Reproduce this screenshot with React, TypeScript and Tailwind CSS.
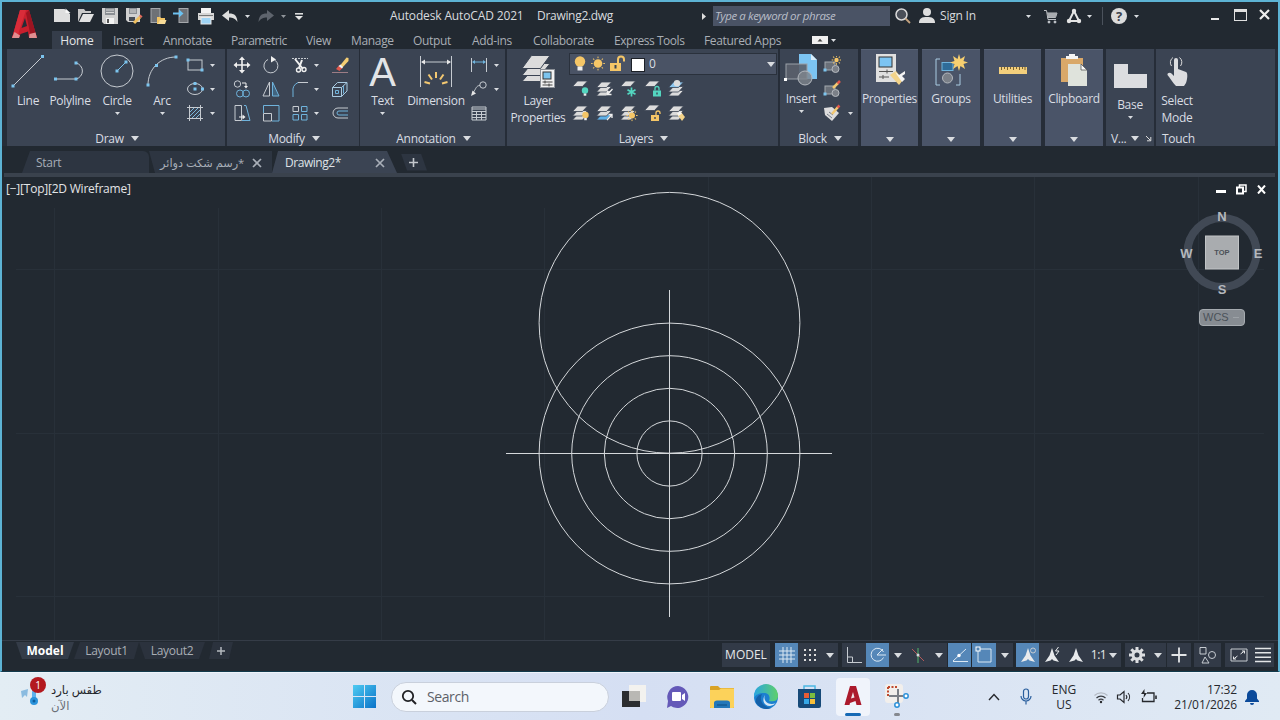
import type { ReactNode } from 'react';
import clsx from 'clsx';

type IconProps = {
    w?: number;
    h?: number;
    className?: string;
    children: ReactNode;
};

function Icon({ w = 18, h = 18, className, children }: IconProps) {
    return (
        <svg
            width={w}
            height={h}
            viewBox={`0 0 ${w} ${h}`}
            fill="none"
            stroke="#c6cbd1"
            strokeWidth={1}
            className={clsx('block shrink-0', className)}
        >
            {children}
        </svg>
    );
}

function Caret({ big = false, className }: { big?: boolean; className?: string }) {
    const w = big ? 8 : 5;
    const h = big ? 5 : 3;
    return (
        <svg width={w} height={h} viewBox={`0 0 ${w} ${h}`} className={clsx('block shrink-0', className)}>
            <path d={`M0 0H${w}L${w / 2} ${h}Z`} fill="#d9dce0" />
        </svg>
    );
}

/* blue grip point */
function Grip({ x, y }: { x: number; y: number }) {
    return <rect x={x - 1.5} y={y - 1.5} width={3} height={3} fill="#7cc4ee" stroke="none" />;
}

function Sheet({ y, fill = '#dcdcdc' }: { y: number; fill?: string }) {
    return (
        <path
            d={`M0.500 ${y + 5.5}L5.500 ${y}H15.500L10.500 ${y + 5.5}Z`}
            fill={fill}
            stroke="#3b4453"
            strokeWidth={0.8}
        />
    );
}

function Bulb({ x, y, fill }: { x: number; y: number; fill: string }) {
    return (
        <g stroke="none">
            <circle cx={x} cy={y} r={3.2} fill={fill} />
            <rect x={x - 1.3} y={y + 3} width={2.6} height={2.2} fill="#eeeeee" />
        </g>
    );
}

function Lock({ x, y, fill, open = false }: { x: number; y: number; fill: string; open?: boolean }) {
    return (
        <g>
            <path
                d={open ? `M${x + 5} ${y}v-2a2 2 0 0 1 4 0v1` : `M${x + 2} ${y}v-2a2 2 0 0 1 4 0v2`}
                stroke={fill}
                strokeWidth={1.3}
            />
            <rect x={x} y={y} width={8} height={6} fill={fill} stroke="none" />
            <rect x={x + 3.3} y={y + 2} width={1.4} height={2} fill="#3b4453" stroke="none" />
        </g>
    );
}

function Sun({ x, y, r }: { x: number; y: number; r: number }) {
    return (
        <g stroke="#f5c667">
            <circle cx={x} cy={y} r={r} fill="#f5c667" stroke="none" />
            {[0, 45, 90, 135, 180, 225, 270, 315].map((a) => (
                <path key={a} d={`M${x} ${y - r - 1}V${y - r - 2.6}`} transform={`rotate(${a} ${x} ${y})`} />
            ))}
        </g>
    );
}

/* ---------- quick access ---------- */

function AppLogo() {
    return (
        <Icon w={26} h={30} className="mt-[7px]">
            <g stroke="none">
                <path d="M8 1H17L25 29H17L16 22.500L8.500 25L7 29H0Z" fill="#c81f2d" />
                <path d="M8 1H14L6.500 24L7 29H0Z" fill="#d92c39" />
                <path d="M13 9L9.500 19L15 17Z" fill="#252c36" />
                <path d="M14 4L17 1L25 29H19Z" fill="#9c1421" />
                <path d="M0 29L2.500 23L8 26.500L7 29ZM17 29L17.500 25L23.500 23.500L25 29Z" fill="#e08e90" />
            </g>
        </Icon>
    );
}

function QuickAccess() {
    return (
        <div className="flex items-center">
            <div className="flex w-6 justify-center">
                <Icon>
                    <path d="M1 2H11.500L17 7V15H1Z" fill="#dedede" stroke="none" />
                    <path d="M12.500 1.500L17.500 6H12.500Z" fill="#f6f6f6" stroke="none" />
                </Icon>
            </div>
            <div className="flex w-6 justify-center">
                <Icon>
                    <path d="M1 15V2H7L8.500 4H14V6H5Z" fill="#c8c8c8" stroke="none" />
                    <path d="M2 15L6 7H17L13 15Z" fill="#e2e2e2" stroke="none" />
                </Icon>
            </div>
            <div className="flex w-6 justify-center">
                <Icon>
                    <path d="M1 1H17V17H3L1 15Z" fill="#d0d0d0" stroke="none" />
                    <rect x={4} y={1} width={10} height={7} fill="#8b8f94" stroke="none" />
                    <path d="M5 3H13M5 5.500H13" stroke="#d8d8d8" />
                    <rect x={5} y={11} width={8} height={6} fill="#f3f3f3" stroke="none" />
                    <rect x={6} y={12} width={2} height={4} fill="#555" stroke="none" />
                </Icon>
            </div>
            <div className="flex w-6 justify-center">
                <Icon>
                    <path d="M1 1H15V15H3L1 13Z" fill="#d0d0d0" stroke="none" />
                    <rect x={4} y={1} width={8} height={6} fill="#8b8f94" stroke="none" />
                    <path d="M5 3H11M5 5H11" stroke="#d8d8d8" />
                    <rect x={4} y={10} width={6} height={4} fill="#454b54" stroke="none" />
                    <path d="M9 16L15 10" stroke="#f0c060" strokeWidth={3} />
                    <path d="M15 10L16.500 8.500" stroke="#e26a5c" strokeWidth={3} />
                </Icon>
            </div>
            <div className="flex w-6 justify-center">
                <Icon>
                    <rect x={2} y={1.500} width={9} height={14} fill="#6e7176" stroke="#a5a8ac" />
                    <path d="M8 10H11L12 11H16V17H8Z" fill="#f2c464" stroke="none" />
                    <path d="M9 17L11 13H17.500L16 17Z" fill="#f8dc98" stroke="none" />
                </Icon>
            </div>
            <div className="flex w-6 justify-center">
                <Icon>
                    <rect x={6} y={1.500} width={9} height={14} fill="#6e7176" stroke="#a5a8ac" />
                    <path d="M0 6.500H8" stroke="#6cc1f0" strokeWidth={2} />
                    <path d="M6 2.500L10.500 6.500L6 10.500Z" fill="#6cc1f0" stroke="none" />
                </Icon>
            </div>
            <div className="flex w-6 justify-center">
                <Icon>
                    <rect x={4} y={1} width={10} height={5} fill="#f2f2f2" stroke="none" />
                    <rect x={1} y={6} width={16} height={7} fill="#d6d6d6" stroke="none" />
                    <path d="M2 8.500H16" stroke="#777" />
                    <rect x={4} y={10.500} width={10} height={6.500} fill="#9fd4f5" stroke="#e8e8e8" />
                </Icon>
            </div>
            <div className="flex w-6 justify-center">
                <Icon>
                    <path d="M1 8.500L8 3V6.500C14 6.500 16 9 16.500 15C14 11.500 12 10.500 8 10.500V14Z" fill="#dedede" stroke="none" />
                </Icon>
            </div>
            <div className="flex w-[11px] justify-center">
                <Caret />
            </div>
            <div className="flex w-[25px] justify-center">
                <Icon>
                    <path d="M17 8.500L10 3V6.500C4 6.500 2 9 1.500 15C4 11.500 6 10.500 10 10.500V14Z" fill="#5e646d" stroke="none" />
                </Icon>
            </div>
            <div className="flex w-[11px] justify-center opacity-60">
                <Caret />
            </div>
            <div className="flex w-[19px] justify-center">
                <Icon w={8} h={7}>
                    <path d="M0 .8H8" stroke="#e6e6e6" strokeWidth={1.500} />
                    <path d="M0 3H8L4 7Z" fill="#e6e6e6" stroke="none" />
                </Icon>
            </div>
        </div>
    );
}

function TitleBar() {
    return (
        <div className="flex h-[28px] items-center text-[12px] text-[#d8dbdf]">
            <QuickAccess />
            <div className="ml-[82px] w-[147px] whitespace-nowrap tracking-[-0.14px]">Autodesk AutoCAD 2021</div>
            <div className="w-[165px] whitespace-nowrap tracking-[-0.3px]">Drawing2.dwg</div>
            <svg width={4} height={7} viewBox="0 0 4 7" className="block">
                <path d="M0 0L4 3.500L0 7Z" fill="#dedede" />
            </svg>
            <div className="ml-[7px] flex h-5 w-[177px] items-center bg-[#4a5365] pl-[2px] text-[11.500px] tracking-[-0.42px] italic whitespace-nowrap text-[#b9bec8]">
                Type a keyword or phrase
            </div>
            <Icon className="ml-[4px]">
                <circle cx={7.500} cy={7.500} r={5.500} stroke="#d9d9d9" strokeWidth={1.500} fill="#4a4f58" />
                <path d="M11.500 11.500L16 16" stroke="#c3a27e" strokeWidth={1.800} />
            </Icon>
            <Icon className="ml-[6px]">
                <circle cx={9} cy={5} r={4} fill="#dedede" stroke="none" />
                <path d="M1 16C1 11 4 10 9 10S17 11 17 16Z" fill="#dedede" stroke="none" />
            </Icon>
            <div className="ml-1 w-[86px] tracking-[-0.2px] whitespace-nowrap">Sign In</div>
            <Caret />
            <Icon w={15} h={15} className="ml-[12px]">
                <path d="M1 1.500H3.500L5 10.500H13M4 4H14L12.500 8.500H4.500" stroke="#bdc0c4" />
                <path d="M4 4H14L12.500 8.500H5Z" fill="#a9acb0" stroke="none" />
                <circle cx={6} cy={13} r={1} fill="#ccc" />
                <circle cx={12} cy={13} r={1} fill="#ccc" />
            </Icon>
            <Icon w={16} h={16} className="ml-[8px]">
                <path d="M8 3L3 13H13Z" stroke="#e4e4e4" strokeWidth={2} />
                <circle cx={8} cy={3} r={2.200} fill="#e4e4e4" stroke="none" />
                <circle cx={3} cy={13} r={2.200} fill="#e4e4e4" stroke="none" />
                <circle cx={13} cy={13} r={2.200} fill="#e4e4e4" stroke="none" />
            </Icon>
            <Caret className="ml-[5px]" />
            <div className="ml-[10px] h-[18px] w-px bg-[#4b525c]" />
            <div className="ml-[8px] flex h-4 w-4 items-center justify-center rounded-full bg-[#dcdcdc] text-[13px] leading-none font-bold text-[#3c424c]">
                ?
            </div>
            <Caret className="ml-[7px]" />
            <div className="mt-[6px] ml-[72px] h-[2px] w-[8px] bg-[#e8e8e8]" />
            <div className="-mt-[3px] ml-[15px] h-[12px] w-[13px] border border-t-[3px] border-[#e0e0e0]" />
            <Icon w={11} h={11} className="-mt-[3px] ml-[12px]">
                <path d="M1 1L10 10M10 1L1 10" stroke="#ededed" strokeWidth={2.200} />
            </Icon>
        </div>
    );
}

function MenuTabs() {
    return (
        <div className="flex h-[19px] items-center pt-px text-[12px] tracking-[-0.33px] whitespace-nowrap text-[#a9aeb5]">
            <div className="ml-[2px] flex h-full w-[50px] items-center justify-center bg-[#353d4a] pt-px tracking-[-0.1px] text-[#e4e6e9]">
                Home
            </div>
            <div className="ml-[11px] w-[50px] pt-px">Insert</div>
            <div className="w-[68px] pt-px">Annotate</div>
            <div className="w-[75px] pt-px tracking-[-0.55px]">Parametric</div>
            <div className="w-[45px] pt-px">View</div>
            <div className="w-[62px] pt-px">Manage</div>
            <div className="w-[59px] pt-px">Output</div>
            <div className="w-[61px] pt-px">Add-ins</div>
            <div className="w-[81px] pt-px">Collaborate</div>
            <div className="w-[90px] pt-px tracking-[-0.45px]">Express Tools</div>
            <div className="w-[108px] pt-px">Featured Apps</div>
            <Icon w={16} h={8}>
                <rect width={16} height={8} fill="#f0f0f0" stroke="none" />
                <path d="M5.500 5.500L8 2.800L10.500 5.500Z" fill="#444" stroke="none" />
            </Icon>
            <Caret className="ml-[3px]" />
        </div>
    );
}

/* ---------- ribbon ---------- */

function Footer({ label }: { label: string }) {
    return (
        <div className="flex h-[16px] items-center justify-center gap-[7px] pt-px pl-[2px] text-[12px] whitespace-nowrap">
            {label}
            <Caret big />
        </div>
    );
}

type BigButtonProps = {
    label: string;
    className: string;
    caret?: boolean;
    children: ReactNode;
};

function BigButton({ label, className, caret, children }: BigButtonProps) {
    return (
        <div className={clsx('flex shrink-0 flex-col items-center', className)}>
            <div className="flex h-[39px] items-end justify-center">{children}</div>
            <div className="mt-[4px] h-[17px] text-center text-[12px] leading-[17px] whitespace-pre">{label}</div>
            {caret && <Caret className="mt-[3px]" />}
        </div>
    );
}

function DrawPanel() {
    return (
        <div className="flex w-[218px] flex-col bg-[#3b4453]">
            <div className="flex h-[81px]">
                <BigButton label="Line" className="w-[42px]">
                    <Icon w={34} h={34}>
                        <path d="M2 32L31 3" />
                        <Grip x={2} y={32} />
                        <Grip x={31.500} y={2.500} />
                    </Icon>
                </BigButton>
                <BigButton label="Polyline" className="w-[42px]">
                    <Icon w={34} h={34}>
                        <path d="M2 25H23A8.200 8.200 0 0 0 23 9" />
                        <Grip x={2.500} y={25} />
                        <Grip x={23} y={25} />
                        <Grip x={23} y={9} />
                    </Icon>
                </BigButton>
                <BigButton label="Circle" className="w-[52px]" caret>
                    <Icon w={34} h={34}>
                        <circle cx={17} cy={17} r={16} />
                        <path d="M17 17L26 8" stroke="#7cc4ee" />
                        <Grip x={17} y={17} />
                        <Grip x={26} y={8} />
                    </Icon>
                </BigButton>
                <BigButton label="Arc" className="w-[38px]" caret>
                    <Icon w={34} h={34}>
                        <path d="M3 31C3 15 15 3 31 3" />
                        <Grip x={3} y={31} />
                        <Grip x={11.500} y={11.500} />
                        <Grip x={31} y={3} />
                    </Icon>
                </BigButton>
                <div className="grid h-[76px] grid-cols-[24px_10px] grid-rows-3 items-center justify-items-center pt-[4px] pl-[2px]">
                    <Icon>
                        <rect x={2} y={4} width={14} height={10} />
                        <Grip x={2} y={4} />
                        <Grip x={16} y={14} />
                    </Icon>
                    <Caret />
                    <Icon>
                        <ellipse cx={9} cy={9} rx={7.500} ry={5.500} />
                        <Grip x={9} y={9} />
                        <Grip x={9} y={3.500} />
                        <Grip x={16.500} y={9} />
                    </Icon>
                    <Caret />
                    <Icon>
                        <path d="M3.500 1V17M14.500 1V17M1 3.500H17M1 14.500H17" />
                        <path d="M4 8L8 4M4 12L12 4M6 14L14 6M10 14L14 10" stroke="#7cb7dc" />
                    </Icon>
                    <Caret />
                </div>
            </div>
            <Footer label="Draw" />
        </div>
    );
}

function ModifyPanel() {
    return (
        <div className="ml-[2px] flex w-[132px] flex-col bg-[#3b4453]">
            <div className="h-[81px] pt-[4px]">
                <div className="grid h-[72px] grid-cols-[29px_29px_29px_5px_42px] grid-rows-3 items-center justify-items-center">
                    <Icon>
                        <path d="M9 2V16M2 9H16" stroke="#f0f0f0" strokeWidth={1.600} />
                        <path
                            d="M9 0.500L12 4H6ZM9 17.500L6 14H12ZM0.500 9L4 6V12ZM17.500 9L14 12V6Z"
                            fill="#f0f0f0"
                            stroke="none"
                        />
                    </Icon>
                    <Icon>
                        <path d="M6 3.500A7 7 0 1 0 13 4.200" />
                        <path d="M9 0L14 3.500L9 6.500Z" fill="#f0f0f0" stroke="none" />
                    </Icon>
                    <Icon>
                        <path d="M1 2.500H17" strokeDasharray="2 1" />
                        <path d="M4 3L12 13M11 4L8 12" stroke="#f0f0f0" strokeWidth={2} />
                        <circle cx={7.500} cy={14} r={2} stroke="#f0f0f0" strokeWidth={1.400} />
                        <circle cx={13} cy={13.500} r={2} stroke="#f0f0f0" strokeWidth={1.400} />
                    </Icon>
                    <Caret />
                    <Icon>
                        <path d="M9 9.500L15.500 1.500L17.500 2V5L11 12Z" fill="#f5ce73" stroke="none" />
                        <path d="M5 13L8 9.500L11.500 12L8.500 15Z" fill="#e0574b" stroke="none" />
                        <path d="M7.500 10L9.500 8.500L12 11L11 12.500Z" fill="#f4f4f4" stroke="none" />
                        <path d="M1 16.500H17" stroke="#9c7d86" />
                    </Icon>
                    <Icon>
                        <circle cx={4.500} cy={4} r={3.200} />
                        <circle cx={7} cy={13.500} r={3.500} stroke="#6fb3dc" />
                        <circle cx={13} cy={13.500} r={3.500} stroke="#6fb3dc" />
                        <path d="M9 3H13V6" stroke="#f0f0f0" />
                        <path d="M11 6H15L13 8.500Z" fill="#f0f0f0" stroke="none" />
                    </Icon>
                    <Icon>
                        <path d="M7.500 2V16H1Z" />
                        <path d="M10.500 2V16H17Z" stroke="#6fb3dc" fill="#41647f" />
                    </Icon>
                    <Icon>
                        <path d="M2 17V12A9 9 0 0 1 7 2.500" stroke="#6fb3dc" />
                        <path d="M7 2.500H17" />
                    </Icon>
                    <Caret />
                    <Icon>
                        <path d="M1.500 7.500H10.500V16.500H1.500ZM1.500 7.500L6.500 2.500H16L10.500 7.500M16 2.500V11L10.500 16.500" stroke="#a9cbe2" />
                        <path d="M4.500 10.500H7.500V13.500H4.500ZM12.500 6V13.500" stroke="#6fb3dc" />
                    </Icon>
                    <Icon>
                        <path d="M2 1.500H8.500V16.500H2Z" />
                        <path d="M11 1.500H13L17 16.500H9" stroke="#6fb3dc" />
                        <path d="M6 13H10" stroke="#f0f0f0" />
                        <path d="M9.500 10.500L12.500 13L9.500 15.500Z" fill="#f0f0f0" stroke="none" />
                    </Icon>
                    <Icon>
                        <path d="M1.500 9V1.500H17V17H10" stroke="#6fb3dc" />
                        <path d="M1.500 9.500H9.500V17H1.500Z" />
                    </Icon>
                    <Icon>
                        <path d="M2 2.500H7.500V7.500H2Z" />
                        <path d="M10.500 2.500H16V7.500H10.500ZM2 10.500H7.500V16H2ZM10.500 10.500H16V16H10.500Z" stroke="#6fb3dc" />
                    </Icon>
                    <Caret />
                    <Icon>
                        <path d="M17 4H7A5 5 0 0 0 7 14H17" />
                        <path d="M17 7H8A2 2 0 0 0 8 11H17" stroke="#6fb3dc" />
                    </Icon>
                </div>
            </div>
            <Footer label="Modify" />
        </div>
    );
}

function AnnotationPanel() {
    return (
        <div className="ml-px flex w-[145px] flex-col bg-[#3b4453]">
            <div className="flex h-[81px]">
                <BigButton label="Text" className="w-[45px]" caret>
                    <div className="flex h-[33px] items-center font-[Liberation_Sans] text-[40px] leading-none text-[#e2e4e7]">
                        A
                    </div>
                </BigButton>
                <BigButton label="Dimension" className="w-[62px]">
                    <Icon w={34} h={34}>
                        <path d="M1.500 2V33M32.500 2V33M3 8H31" />
                        <path d="M2 8L6 5.500V10.500ZM32 8L28 5.500V10.500Z" fill="#e6e6e6" stroke="none" />
                        <path
                            d="M17 18V24M9.500 20.500L13 25.500M24.500 20.500L21 25.500M5.500 28L11 29.500M28.500 28L23 29.500"
                            stroke="#f3c871"
                            strokeWidth={2}
                        />
                    </Icon>
                </BigButton>
                <div className="grid h-[76px] grid-cols-[24px_10px] grid-rows-3 items-center justify-items-center pt-[4px]">
                    <Icon>
                        <path d="M1.500 2V16M16.500 2V16" />
                        <path d="M3 6H15" stroke="#6fb3dc" />
                        <path d="M2 6L5 4V8ZM16 6L13 4V8Z" fill="#6fb3dc" stroke="none" />
                    </Icon>
                    <Caret />
                    <Icon>
                        <circle cx={13} cy={5} r={3.200} />
                        <path d="M10 5.500C6 5.500 6 9 3.500 12" />
                        <path d="M1 16L2.500 10.500L6 13.500Z" fill="#e6e6e6" stroke="none" />
                    </Icon>
                    <Caret />
                    <Icon>
                        <path d="M2 3H16V16H2ZM2 7.500H16M2 10.500H16M2 13.500H16M6.500 7V16M11.500 7V16M2 5H16" />
                    </Icon>
                </div>
            </div>
            <Footer label="Annotation" />
        </div>
    );
}

type LayerKind = 'bulb' | 'lock' | 'unlock' | 'snow' | 'arrow' | 'arrowUp' | 'person' | 'bulbOn' | 'sun' | 'brush';

function LayerIcon({ kind }: { kind: LayerKind }) {
    const single = kind === 'bulb' || kind === 'lock' || kind === 'unlock' || kind === 'snow';
    const top = kind === 'person' ? '#8cc6ee' : '#dcdcdc';
    return (
        <Icon>
            {single ? (
                <Sheet y={1} />
            ) : (
                <>
                    <Sheet y={10.500} fill={kind === 'arrowUp' ? '#5eb0e8' : '#dcdcdc'} />
                    <Sheet y={6.500} />
                    <Sheet y={2} fill={top} />
                </>
            )}
            {kind === 'bulb' && <Bulb x={13} y={10.500} fill="#53d6c0" />}
            {kind === 'bulbOn' && <Bulb x={13.500} y={11} fill="#f5c667" />}
            {kind === 'lock' && <Lock x={9} y={10.500} fill="#53d6c0" />}
            {kind === 'unlock' && <Lock x={7} y={11} fill="#f5c667" open />}
            {kind === 'snow' && (
                <path
                    d="M11.500 7.500V16.500M7.500 9.700L15.500 14.300M15.500 9.700L7.500 14.300"
                    stroke="#53d6c0"
                    strokeWidth={1.700}
                />
            )}
            {kind === 'sun' && <Sun x={12} y={11.500} r={3} />}
            {kind === 'arrow' && (
                <path d="M16.500 9L11.500 14.500M11.500 10.500V14.500H15.500" stroke="#f0f0f0" strokeWidth={1.300} />
            )}
            {kind === 'arrowUp' && (
                <path d="M11 16L16 10.500M12.500 10.500H16V14" stroke="#f0f0f0" strokeWidth={1.300} />
            )}
            {kind === 'person' && <circle cx={9} cy={3.200} r={3.200} fill="#dcdcdc" stroke="none" />}
            {kind === 'brush' && (
                <>
                    <path d="M9 10L13 8L17 13L14 17Z" fill="#f3d389" stroke="none" />
                    <path d="M9 9.500L12 7.500L14 9.500L10.500 12Z" fill="#f4f4f4" stroke="none" />
                </>
            )}
        </Icon>
    );
}

const layerRows: LayerKind[] = [
    'bulb', 'arrow', 'snow', 'lock', 'person',
    'bulbOn', 'arrowUp', 'sun', 'unlock', 'brush',
];

function LayersPanel() {
    return (
        <div className="ml-[2px] flex w-[271px] flex-col bg-[#3b4453]">
            <div className="flex h-[81px]">
                <BigButton label={'Layer\nProperties'} className="w-[62px]">
                    <Icon w={34} h={34}>
                        <g fill="#dcdcdc" stroke="#3b4453">
                            <path d="M1 27.500L10.500 16.500H29L19.500 27.500Z" />
                            <path d="M1 21.500L10.500 9.500H29L19.500 21.500Z" />
                            <path d="M1 14.500L10.500 1.500H29L19.500 14.500Z" />
                        </g>
                        <rect x={19.500} y={15.500} width={14} height={18} fill="#f2f2f2" stroke="#8d9299" />
                        <rect x={22} y={18} width={8} height={7} fill="#7cc4ee" stroke="#333" />
                        <path d="M21.500 28H31.500M21.500 31H31.500M24 26.500V29.500M28 29.500V32.500" stroke="#444" />
                    </Icon>
                </BigButton>
                <div className="flex flex-col pt-[4px]">
                    <div className="flex h-[22px] w-[208px] items-center border border-[#2a313c] bg-[#4a5365]">
                        <Icon w={16} className="ml-[2px]">
                            <circle cx={8} cy={6.500} r={5.200} fill="#f5c667" stroke="none" />
                            <rect x={5.500} y={11.500} width={5} height={4} fill="#eeeeee" stroke="none" />
                        </Icon>
                        <Icon className="ml-px">
                            <Sun x={9} y={8.500} r={4.300} />
                        </Icon>
                        <Icon w={17} className="ml-[2px]">
                            <path d="M9 8V4.500A3 3 0 0 1 15 4.500V6.500" stroke="#f5c667" strokeWidth={2} />
                            <rect x={1} y={8} width={11} height={8} fill="#f5c667" stroke="none" />
                            <rect x={5.500} y={10} width={2} height={3.500} fill="#3b4453" stroke="none" />
                        </Icon>
                        <div className="mt-[2px] ml-[5px] h-[14px] w-[14px] border border-[#1c2027] bg-white" />
                        <div className="ml-[4px] flex-1 text-[12px]">0</div>
                        <Caret big className="mr-px" />
                    </div>
                    <div className="mt-[2px] grid w-[120px] grid-cols-5 grid-rows-[24px_24px] items-center justify-items-center">
                        {layerRows.map((kind) => (
                            <LayerIcon key={kind} kind={kind} />
                        ))}
                    </div>
                </div>
            </div>
            <Footer label="Layers" />
        </div>
    );
}

function MiniBlock({ pencil = false }: { pencil?: boolean }) {
    return (
        <Icon>
            <rect x={2} y={6} width={10} height={8} fill="#6a7079" stroke="#a4a9b0" />
            <circle cx={12.500} cy={13} r={3.500} fill="#7b8088" stroke="#b4b8be" />
            <Grip x={2} y={14} />
            {pencil ? (
                <>
                    <path d="M10 8L15 3" stroke="#f3c871" strokeWidth={2.500} />
                    <path d="M14.500 3.500L17 1" stroke="#e2574c" strokeWidth={2.500} />
                </>
            ) : (
                <Sun x={13.500} y={4} r={2.200} />
            )}
        </Icon>
    );
}

function BlockPanel() {
    return (
        <div className="ml-[2px] flex w-[78px] flex-col bg-[#3b4453]">
            <div className="flex h-[81px]">
                <BigButton label="Insert" className="-mt-[2px] w-[42px] pb-[2px]" caret>
                    <Icon w={34} h={34}>
                        <path d="M15 2H27L33 8V27H15Z" fill="#7cc4f2" stroke="none" />
                        <path d="M27 2V8H33Z" fill="#d7ecfa" stroke="none" />
                        <rect x={2} y={12} width={21} height={15} fill="#5b616b" stroke="#9aa0a8" fillOpacity={0.9} />
                        <circle cx={21} cy={26} r={7} fill="#7e848c" fillOpacity={0.8} stroke="#b3b8be" />
                        <rect x={0} y={26} width={3} height={3} fill="#fff" stroke="none" />
                    </Icon>
                </BigButton>
                <div className="grid h-[76px] grid-cols-[20px_14px] grid-rows-3 items-center justify-items-center pt-[4px]">
                    <MiniBlock />
                    <span />
                    <MiniBlock pencil />
                    <span />
                    <Icon>
                        <path d="M1 4L9 3L16 9L9 17L2 11Z" fill="#dedede" stroke="none" />
                        <path d="M4 10L9 14M6 8L10 11" stroke="#777d86" />
                        <path d="M9 10L15 3" stroke="#f3c871" strokeWidth={2.500} />
                        <path d="M14.500 3.500L16.500 1.500" stroke="#e2574c" strokeWidth={2.500} />
                    </Icon>
                    <Caret className="ml-[2px]" />
                </div>
            </div>
            <Footer label="Block" />
        </div>
    );
}

function CollapsedPanel({ label, className, children }: { label: string; className: string; children: ReactNode }) {
    return (
        <div className={clsx('flex shrink-0 flex-col items-center border-t border-[#566073] bg-[#4a5468]', className)}>
            <div className="flex h-[38px] items-center justify-center">{children}</div>
            <div className="mt-[2px] h-[17px] text-[12px] leading-[17px] whitespace-nowrap">{label}</div>
            <Caret big className="mt-[30px]" />
        </div>
    );
}

function Ribbon() {
    return (
        <div className="flex h-[97px] bg-[#262d38] pl-[5px] tracking-[-0.3px] text-[#d9dde3]">
            <DrawPanel />
            <ModifyPanel />
            <AnnotationPanel />
            <LayersPanel />
            <BlockPanel />
            <CollapsedPanel label="Properties" className="ml-[3px] w-[57px]">
                <Icon w={32} h={34}>
                    <rect x={2} y={2} width={20} height={28} fill="#e0e0e0" stroke="none" />
                    <rect x={5} y={5} width={13} height={10} fill="#7cc4f2" stroke="#333" />
                    <path d="M5 19.500H19M5 25H15M13 17.500V21.500M9 23V27" stroke="#555" />
                    <path d="M16 23L22 19L29 28L25 33Z" fill="#f3d389" stroke="none" />
                    <path d="M21 20L25 23L31 19V22L28 24L31 27L28 30Z" fill="#f4f4f4" stroke="none" />
                </Icon>
            </CollapsedPanel>
            <CollapsedPanel label="Groups" className="ml-[4px] w-[58px]">
                <Icon w={34} h={34}>
                    <path d="M6 7H2V33H6M22 33H26V22" stroke="#a9cbe2" />
                    <rect x={8} y={10.500} width={11} height={8} fill="#2f6c99" stroke="#6fb3dc" />
                    <circle cx={13.500} cy={26} r={5} fill="#7b8088" stroke="#b4b8be" />
                    <path
                        d="M25 2L26.500 7L31 4L29.500 9L34 10.500L29.500 12L31 17L26.500 14L25 19L23.500 14L19 17L20.500 12L16 10.500L20.500 9L19 4L23.500 7Z"
                        fill="#f7cf70"
                        stroke="none"
                    />
                </Icon>
            </CollapsedPanel>
            <CollapsedPanel label="Utilities" className="ml-[4px] w-[57px]">
                <Icon w={30} h={34}>
                    <rect x={1} y={15} width={28} height={7} fill="#f3cf7c" stroke="none" />
                    <path
                        d="M3.500 15V18M6.500 15V17M9.500 15V18M12.500 15V17M15.500 15V18M18.500 15V17M21.500 15V18M24.500 15V17M27 15V18"
                        stroke="#7a6230"
                    />
                </Icon>
            </CollapsedPanel>
            <CollapsedPanel label="Clipboard" className="ml-[4px] w-[58px]">
                <Icon w={28} h={34}>
                    <rect x={1} y={6} width={22} height={24} fill="#d9a869" stroke="none" />
                    <path d="M6 7V4H9V2H15V4H18V7Z" fill="#f4f4f4" stroke="none" />
                    <path d="M8 12H21L27 18V34H8Z" fill="#dfe3dc" stroke="none" />
                    <path d="M21 12V18H27Z" fill="#fafafa" stroke="#444" strokeWidth={0.700} />
                </Icon>
            </CollapsedPanel>
            <div className="ml-[3px] flex w-[48px] flex-col bg-[#3b4453]">
                <div className="flex h-[81px] flex-col items-center">
                    <Icon w={33} h={25} className="mt-[14px] ml-px">
                        <path d="M0 1H14V11H33V25H0Z" fill="#dcdde0" stroke="none" />
                    </Icon>
                    <div className="mt-[9px] h-[16px] text-[12px] leading-[16px]">Base</div>
                    <Caret className="mt-[3px]" />
                </div>
                <div className="flex h-[16px] items-center pt-px pl-[5px] text-[12px]">
                    V...
                    <Caret big className="ml-[5px]" />
                    <Icon w={7} h={7} className="ml-[6px]">
                        <path d="M1 1L5.500 5.500M5.800 2V5.800H2" stroke="#dcdcdc" />
                    </Icon>
                </div>
            </div>
            <div className="ml-[2px] flex w-[119px] flex-col bg-[#3b4453]">
                <div className="flex h-[81px]">
                    <BigButton label={'Select\nMode'} className="w-[42px]">
                        <Icon w={24} h={34}>
                            <path d="M6.500 12A6 6 0 0 1 8 3.500M15.500 12A6 6 0 0 0 14.500 3.500" stroke="#dcdcdc" />
                            <path
                                d="M9 6a2 2 0 0 1 4 0V15L21 18C23 19 22.500 25 21 29L19 32H11C8 29 5 24 2.500 21C2 19 5 18 6.500 19.500L9 22Z"
                                fill="#dcdde0"
                                stroke="none"
                            />
                        </Icon>
                    </BigButton>
                </div>
                <div className="flex h-[16px] items-center pt-px pl-[6px] text-[12px]">Touch</div>
            </div>
        </div>
    );
}

/* ---------- drawing tabs ---------- */

function CloseMark() {
    return (
        <Icon w={10} h={10} className="-mt-px">
            <path d="M1 1L9 9M9 1L1 9" stroke="#a9afb8" strokeWidth={1.700} />
        </Icon>
    );
}

function FileTabs() {
    return (
        <div className="flex h-[22px] pl-[20px] text-[12px] whitespace-nowrap text-[#a7adb6]">
            <div className="flex w-[127px] items-center rounded-tr-[6px] bg-[#2d3541] pt-[2px] pl-[14px] tracking-[-0.3px] [clip-path:polygon(8px_0,100%_0,100%_100%,0_100%)]">
                Start
            </div>
            <div className="flex w-[123px] items-center bg-[#2d3541] pt-[2px] pl-[11px] [clip-path:polygon(0_0,100%_0,100%_100%,6px_100%)]">
                <span className="w-[92px] text-[11.300px]">رسم شكت دوائر*</span>
                <CloseMark />
            </div>
            <div className="flex w-[125px] items-center bg-[#3b4453] pt-[2px] pl-[13px] tracking-[-0.45px] text-[#dfe2e6] [clip-path:polygon(6px_0,115px_0,100%_100%,0_100%)]">
                <span className="w-[90px]">Drawing2*</span>
                <CloseMark />
            </div>
            <div className="ml-[4px] flex h-[17px] w-[26px] items-center justify-center self-center bg-[#2d3541] [clip-path:polygon(0_0,20px_0,100%_100%,6px_100%)]">
                <Icon w={9} h={9} className="-ml-px">
                    <path d="M4.500 0V9M0 4.500H9" stroke="#c3c7cc" strokeWidth={1.600} />
                </Icon>
            </div>
        </div>
    );
}

/* ---------- model space ---------- */

const GRID_X = [54, 218, 381, 544, 708, 871, 1034, 1198];
const GRID_Y = [269, 433, 596];
const RINGS = [32.6, 65.2, 97.8, 130.4];

function ViewCube() {
    return (
        <div className="absolute top-[32px] right-[14px] flex w-[84px] flex-col items-center font-[Liberation_Sans] font-bold text-[#a6abb1]">
            <svg width={84} height={92} viewBox="0 0 84 92" className="block">
                <circle cx={42} cy={43.500} r={34.500} fill="none" stroke="#414955" strokeWidth={8} />
                <rect x={25.500} y={27} width={33} height={33} fill="#a9acaf" stroke="#c1c4c6" />
                <g fill="#b4b8bd" fontSize={13} textAnchor="middle">
                    <text x={42} y={12}>N</text>
                    <text x={42} y={84.500}>S</text>
                    <text x={6.500} y={48.500}>W</text>
                    <text x={78} y={48.500}>E</text>
                    <text x={42} y={46} fontSize={7.500} fill="#4c5157">TOP</text>
                </g>
            </svg>
            <div className="mt-[8px] flex h-[17px] w-[46px] items-center justify-between rounded-[4px] border border-[#a6abb0] bg-[#878c92] px-[3px] text-[11px] font-normal text-[#4b5259]">
                WCS
                <span className="mr-[2px] h-px w-[6px] bg-[#9da2a7]" />
            </div>
        </div>
    );
}

function Viewport() {
    return (
        <div className="relative h-[463px] bg-[#222931]">
            <svg width={1276} height={463} viewBox="2 177 1276 463" fill="none" className="block">
                <g stroke="#283039">
                    {GRID_X.map((x) => (
                        <path key={x} d={`M${x + 0.5} ${x > 600 ? 177 : 208}V640`} />
                    ))}
                    {GRID_Y.map((y) => (
                        <path key={y} d={`M16 ${y + 0.5}H1264`} />
                    ))}
                </g>
                <g stroke="#d5d8db">
                    <circle cx={669.5} cy={322.800} r={130.400} />
                    {RINGS.map((r) => (
                        <circle key={r} cx={669.5} cy={453.5} r={r} />
                    ))}
                    <path d="M506 453.500H832M669.500 290V617" />
                </g>
            </svg>
            <div className="absolute top-[4px] left-[4px] text-[12px] leading-[16px] tracking-[-0.22px] whitespace-nowrap text-[#e2e4e6]">
                [−][Top][2D Wireframe]
            </div>
            <div className="absolute top-[6px] right-[12px] flex h-[12px] items-center gap-[10px]">
                <div className="mt-[5px] h-[3px] w-[10px] bg-white" />
                <Icon w={11} h={11}>
                    <path d="M3.500 3V1H10V7.500H8" stroke="#fff" strokeWidth={1.500} />
                    <rect x={1} y={3.500} width={6} height={6} stroke="#fff" strokeWidth={2} />
                </Icon>
                <Icon w={9} h={9}>
                    <path d="M1 .5L8 8.500M8 .5L1 8.500" stroke="#fff" strokeWidth={2} />
                </Icon>
            </div>
            <ViewCube />
        </div>
    );
}

/* ---------- status bar ---------- */

function StatusCell({ on = false, className, children }: { on?: boolean; className: string; children: ReactNode }) {
    return (
        <div
            className={clsx(
                'flex h-[24px] shrink-0 items-center justify-center',
                on ? 'bg-[#5587b8]' : 'bg-[#323a47]',
                className,
            )}
        >
            {children}
        </div>
    );
}

function ScaleFigure({ mark }: { mark?: 'ring' | 'bolt' }) {
    return (
        <Icon>
            <path d="M9 2L11.500 9.500L16 16L10.500 14.500L9 13L7.500 14.500L2 16L6.500 9.500Z" fill="#e8eaec" stroke="none" />
            {mark === 'ring' && <circle cx={14} cy={4.500} r={2.500} />}
            {mark === 'bolt' && <path d="M15.500 1L12.500 5H16L13 9" stroke="#e8eaec" />}
        </Icon>
    );
}

function StatusBar() {
    return (
        <div className="flex h-[31px] border-t border-[#353c47] bg-[#222931] text-[12px] whitespace-nowrap text-[#a9aeb5]">
            <div className="flex h-[18px] pt-px pl-[14px]">
                <div className="flex w-[58px] items-center justify-center bg-[#343c48] font-bold text-white [clip-path:polygon(0_0,100%_0,52px_100%,6px_100%)]">
                    Model
                </div>
                <div className="flex w-[65px] items-center justify-center bg-[#2b323d] tracking-[-0.3px] [clip-path:polygon(6px_0,100%_0,60px_100%,0_100%)]">
                    Layout1
                </div>
                <div className="flex w-[66px] items-center justify-center bg-[#2b323d] tracking-[-0.3px] [clip-path:polygon(0_0,100%_0,60px_100%,6px_100%)]">
                    Layout2
                </div>
                <div className="ml-[4px] flex w-[24px] items-center justify-center bg-[#2b323d] [clip-path:polygon(4px_0,100%_0,20px_100%,0_100%)]">
                    <Icon w={8} h={8}>
                        <path d="M4 0V8M0 4H8" stroke="#b5b9bf" strokeWidth={1.500} />
                    </Icon>
                </div>
            </div>
            <div className="ml-auto flex pt-[2px] pr-[4px]">
                <StatusCell className="w-[48px] text-[#e6e8ea]">MODEL</StatusCell>
                <StatusCell on className="ml-[5px] w-[23px]">
                    <Icon>
                        <path d="M5 1V17M9 1V17M13 1V17M1 5H17M1 9H17M1 13H17" stroke="#dbe8f3" />
                    </Icon>
                </StatusCell>
                <StatusCell className="w-[23px]">
                    <Icon>
                        <path d="M3 4H15M3 9H15M3 14H15" stroke="#dcdcdc" strokeWidth={2} strokeDasharray="2 3" />
                    </Icon>
                </StatusCell>
                <StatusCell className="w-[17px]">
                    <Caret big />
                </StatusCell>
                <StatusCell className="ml-[4px] w-[24px]">
                    <Icon>
                        <path d="M2.500 1V16.500H17M2.500 11H7.500V16.500" />
                    </Icon>
                </StatusCell>
                <StatusCell on className="w-[23px]">
                    <Icon>
                        <path d="M14.500 6A6.500 6.500 0 1 0 14.500 11.500M8 9H17M8 9L14 3" stroke="#dbe8f3" />
                    </Icon>
                </StatusCell>
                <StatusCell className="w-[17px]">
                    <Caret big />
                </StatusCell>
                <StatusCell className="w-[24px]">
                    <Icon>
                        <path d="M9 2V17" stroke="#52b56c" />
                        <path d="M3 3L15 15" stroke="#b35b5b" />
                        <circle cx={9} cy={9} r={1.500} fill="#d5d8db" stroke="none" />
                    </Icon>
                </StatusCell>
                <StatusCell className="w-[17px]">
                    <Caret big />
                </StatusCell>
                <StatusCell on className="ml-px w-[23px]">
                    <Icon>
                        <path d="M2 15L15 3M2 15.500H17" stroke="#dbe8f3" />
                        <circle cx={8} cy={9.500} r={1.700} fill="#fff" stroke="none" />
                    </Icon>
                </StatusCell>
                <StatusCell on className="ml-px w-[24px]">
                    <Icon>
                        <path d="M3 3H16V16H3Z" stroke="#dbe8f3" />
                        <rect x={1} y={1} width={4} height={4} fill="#5587b8" stroke="#fff" />
                    </Icon>
                </StatusCell>
                <StatusCell className="w-[17px]">
                    <Caret big />
                </StatusCell>
                <StatusCell on className="ml-[3px] w-[23px]">
                    <ScaleFigure mark="ring" />
                </StatusCell>
                <StatusCell className="w-[25px]">
                    <ScaleFigure mark="bolt" />
                </StatusCell>
                <StatusCell className="w-[23px]">
                    <ScaleFigure />
                </StatusCell>
                <StatusCell className="w-[34px] gap-[3px] text-[#e6e8ea]">
                    <span className="tracking-[-0.5px]">1:1</span>
                    <Caret big />
                </StatusCell>
                <StatusCell className="ml-[4px] w-[24px]">
                    <Icon>
                        <path
                            d="M9 1V17M1 9H17M3.300 3.300L14.700 14.700M14.700 3.300L3.300 14.700"
                            stroke="#dcdee1"
                            strokeWidth={3}
                        />
                        <circle cx={9} cy={9} r={4} stroke="#dcdee1" strokeWidth={3} fill="#323a47" />
                    </Icon>
                </StatusCell>
                <StatusCell className="w-[17px]">
                    <Caret big />
                </StatusCell>
                <StatusCell className="ml-px w-[24px]">
                    <Icon>
                        <path d="M9 1.500V16.500M1.500 9H16.500" stroke="#e3e5e7" strokeWidth={1.800} />
                    </Icon>
                </StatusCell>
                <StatusCell className="ml-[3px] w-[27px]">
                    <Icon w={20}>
                        <path d="M2 1.500H8V8H2ZM7 11L11 17H4Z" />
                        <circle cx={14} cy={9} r={3.500} />
                    </Icon>
                </StatusCell>
                <StatusCell className="ml-[4px] w-[27px]">
                    <Icon>
                        <path d="M1 3H17V15H1Z" />
                        <path d="M10.500 8L14.500 5M12 5H14.500V7.500M7.500 10L3.500 13M3.500 10.500V13H6" stroke="#e3e5e7" />
                    </Icon>
                </StatusCell>
                <StatusCell className="w-[22px]">
                    <Icon>
                        <path d="M1 2.500H17M1 6.800H17M1 11.200H17M1 15.500H17" stroke="#e3e5e7" strokeWidth={1.600} />
                    </Icon>
                </StatusCell>
            </div>
        </div>
    );
}

/* ---------- windows taskbar ---------- */

function Taskbar() {
    return (
        <div className="flex h-[48px] items-center border-t border-[#eef3fa] bg-linear-to-r from-[#e3edf4] via-[#d5dff3] to-[#e0eaf4] text-[#26282d]">
            <div className="flex w-[351px] items-center pl-[20px]">
                <div className="relative h-[34px] w-[28px]">
                    <svg width={28} height={34} viewBox="0 0 28 34">
                        <path d="M1 11L8 9L7 17L5 15L2 18Z" fill="#8abbe0" />
                        <rect x={12} y={10} width={4} height={12} rx={2} fill="#5db2ee" />
                        <circle cx={14} cy={21} r={4} fill="#2b94dc" />
                        <circle cx={14} cy={21} r={1.500} fill="#0c5d9e" />
                    </svg>
                    <div className="absolute -top-[3px] left-[10px] flex h-4 w-4 items-center justify-center rounded-full bg-[#b3191f] text-[10px] leading-none text-white">
                        1
                    </div>
                </div>
                <div className="ml-[3px] text-[11.700px] leading-[16px] whitespace-nowrap">
                    <div>طقس بارد</div>
                    <div className="text-[#6b6f77]">الآن</div>
                </div>
            </div>
            <svg width={25} height={25} viewBox="0 0 25 25" className="ml-px block">
                <defs>
                    <linearGradient id="win" x1="0" y1="0" x2="1" y2="1">
                        <stop offset="0" stopColor="#4fcbf2" />
                        <stop offset="1" stopColor="#0a72c8" />
                    </linearGradient>
                </defs>
                <path
                    d="M1 1H12V12H1ZM13 1H24V12H13ZM1 13H12V24H1ZM13 13H24V24H13Z"
                    fill="url(#win)"
                />
            </svg>
            <div className="ml-[14px] flex h-[30px] w-[218px] items-center rounded-full border border-[#c9d0dc] bg-[#f3f7fc] pl-[9px] text-[14px] tracking-[-0.4px] text-[#5d6168]">
                <Icon w={16} h={16}>
                    <circle cx={7} cy={7} r={5.200} stroke="#202124" strokeWidth={1.800} />
                    <path d="M11 11L15 15" stroke="#202124" strokeWidth={2} />
                </Icon>
                <span className="ml-[10px]">Search</span>
            </div>
            <svg width={26} height={24} viewBox="0 0 26 24" className="ml-[12px] block">
                <rect x={8} y={0} width={17} height={17} fill="#f3f2ef" />
                <rect x={1} y={6} width={18} height={16} fill="#2b2d30" />
                <rect x={8} y={6} width={11} height={10} fill="#b9b8b4" />
            </svg>
            <svg width={24} height={24} viewBox="0 0 24 24" className="ml-[19px] block">
                <path d="M12 1A11 11 0 1 1 5 21L1 23L2 16A11 11 0 0 1 12 1Z" fill="#6459b8" />
                <rect x={6} y={7} width={9} height={9} rx={1} fill="#fff" />
                <path d="M16 10L19 8V16L16 14Z" fill="#fff" />
            </svg>
            <svg width={26} height={24} viewBox="0 0 26 24" className="ml-[19px] block">
                <path d="M1 2Q1 1 2 1H9L11 3H25V23H1Z" fill="#d9a326" />
                <path d="M1 5H10L12 3.500H25V22Q25 23 24 23H2Q1 23 1 22Z" fill="#fcd25a" />
                <path d="M5 23V18Q5 15.500 8 15.500H18Q21 15.500 21 18V23Z" fill="#2377b9" />
                <path d="M8 20H18" stroke="#155a94" strokeWidth={1.500} />
            </svg>
            <svg width={26} height={26} viewBox="0 0 26 26" className="ml-[18px] block">
                <defs>
                    <linearGradient id="edgeTop" x1="0" y1="0" x2="1" y2="0">
                        <stop offset="0" stopColor="#2aa5e0" />
                        <stop offset="1" stopColor="#5fd06a" />
                    </linearGradient>
                </defs>
                <circle cx={13} cy={13} r={12} fill="#1b7fd0" />
                <path d="M1 12A12 12 0 0 1 25 12C25 17 20 18 16 17C18 12 15 9 11 9C6 9 2 11 1 14Z" fill="url(#edgeTop)" />
                <path d="M9 10C6 15 9 23 18 24A12 12 0 0 1 3 19C2 14 5 11 9 10Z" fill="#1460a8" />
                <path d="M12 11C10 15 13 20 19 20C21 20 23 19 24 18A12 12 0 0 1 17 22C10 22 9 15 12 11Z" fill="#d5e7f5" />
            </svg>
            <svg width={26} height={26} viewBox="0 0 26 26" className="ml-[18px] block">
                <path d="M7 6V2H18V6" stroke="#4cb8e4" strokeWidth={1.500} fill="none" />
                <path d="M1 5H24V22Q24 24 22 24H3Q1 24 1 22Z" fill="#174a78" />
                <path d="M7 9H12V14H7Z" fill="#e65c35" />
                <path d="M13 9H18V14H13Z" fill="#7cbb3f" />
                <path d="M7 15H12V20H7Z" fill="#37a8e6" />
                <path d="M13 15H18V20H13Z" fill="#f5bf3a" />
            </svg>
            <div className="ml-[13px] flex h-[38px] w-[34px] flex-col items-center justify-between rounded-[4px] bg-[#f0f4fb]">
                <svg width={18} height={20} viewBox="0 0 18 20" className="mt-[8px] block">
                    <path d="M6 0H12L17.500 19H12.500L11.500 15L6 17L5.500 19H0.500Z" fill="#ac1a2c" />
                    <path d="M9 6L7 12.500L10.500 11.500Z" fill="#f0e6ea" />
                </svg>
                <div className="h-[3px] w-[16px] rounded-full bg-[#1669b5]" />
            </div>
            <div className="ml-[12px] flex h-[38px] w-[30px] flex-col items-center justify-between">
                <svg width={26} height={28} viewBox="0 0 26 28" className="mt-[5px] block">
                    <rect x={1} y={1} width={18} height={19} rx={3} fill="#f2efec" />
                    <path d="M4 4H14M4 4V13" stroke="#c04a2e" strokeWidth={2} strokeDasharray="2 1.500" />
                    <path d="M5 13H19M14 6V20" stroke="#7b7f86" strokeWidth={2} />
                    <circle cx={22} cy={13} r={2.200} stroke="#2b90d8" strokeWidth={1.500} fill="#fff" />
                    <circle cx={13} cy={22} r={2.200} stroke="#2b90d8" strokeWidth={1.500} fill="#fff" />
                </svg>
                <div className="h-[3px] w-[6px] rounded-full bg-[#85888f]" />
            </div>
            <div className="ml-auto flex items-center text-[12px] leading-[15px]">
                <Icon w={12} h={8}>
                    <path d="M1 7L6 1.500L11 7" stroke="#26282d" strokeWidth={1.400} />
                </Icon>
                <Icon w={14} h={18} className="ml-[19px]">
                    <rect x={4.500} y={1} width={5} height={10} rx={2.500} stroke="#2a5f9e" strokeWidth={1.200} />
                    <path d="M2 8A5 5 0 0 0 12 8M7 13V16.500" stroke="#2a5f9e" strokeWidth={1.200} />
                </Icon>
                <div className="ml-[13px] w-[36px] text-center">
                    <div>ENG</div>
                    <div>US</div>
                </div>
                <Icon w={16} h={16} className="ml-[11px]">
                    <path d="M1.500 6.500A9.500 9.500 0 0 1 14.500 6.500" stroke="#b4bac4" strokeWidth={1.200} />
                    <path d="M3.500 9A6.500 6.500 0 0 1 12.500 9M5.500 11.300A3.600 3.600 0 0 1 10.500 11.300" stroke="#3a3d43" strokeWidth={1.200} />
                    <circle cx={8} cy={13} r={1.200} fill="#26282d" stroke="none" />
                </Icon>
                <Icon w={16} h={16} className="ml-[7px]">
                    <path d="M1.500 6H4L8 2.500V13.500L4 10H1.500Z" stroke="#26282d" strokeWidth={1.200} />
                    <path d="M10 6A3 3 0 0 1 10 10M12 4A6 6 0 0 1 12 12" stroke="#26282d" strokeWidth={1.100} />
                </Icon>
                <Icon w={18} h={16} className="ml-[8px]">
                    <path d="M7 4H14V12.500H2.500V9" stroke="#26282d" strokeWidth={1.300} />
                    <path d="M16 6.500V10" stroke="#26282d" strokeWidth={1.600} />
                    <path d="M4.500 0L1 5H4L3.500 9L7 4H4.500Z" fill="#26282d" stroke="none" />
                </Icon>
                <div className="ml-[11px] w-[68px] text-right tracking-[-0.1px] whitespace-nowrap">
                    <div>17:32</div>
                    <div>21/01/2026</div>
                </div>
                <Icon w={16} h={18} className="mr-[20px] ml-[7px]">
                    <path d="M1 13L3 10.500V7A5 5 0 0 1 13 7V10.500L15 13V14H1Z" fill="#0b4a9a" stroke="none" />
                    <path d="M6 15H10A2 2 0 0 1 6 15Z" fill="#0b4a9a" stroke="none" />
                </Icon>
            </div>
        </div>
    );
}

export default function App() {
    return (
        <div className="h-[720px] w-[1280px] overflow-hidden bg-[#d9e3f4] font-[Open_Sans,Noto_Sans,DejaVu_Sans,sans-serif]">
            <div className="flex h-[672px] w-[1280px] flex-col border-x-2 border-t-2 border-b border-[#5db3d4] border-b-[#123a4c] bg-[#222931]">
                <div className="flex h-[47px] shrink-0">
                    <div className="w-[48px] pl-[10px]">
                        <AppLogo />
                    </div>
                    <div>
                        <TitleBar />
                        <MenuTabs />
                    </div>
                </div>
                <Ribbon />
                <div className="h-[5px] shrink-0" />
                <FileTabs />
                <div className="mr-[3px] ml-[2px] h-[4px] shrink-0 bg-[#3a424d]" />
                <Viewport />
                <StatusBar />
            </div>
            <Taskbar />
        </div>
    );
}
